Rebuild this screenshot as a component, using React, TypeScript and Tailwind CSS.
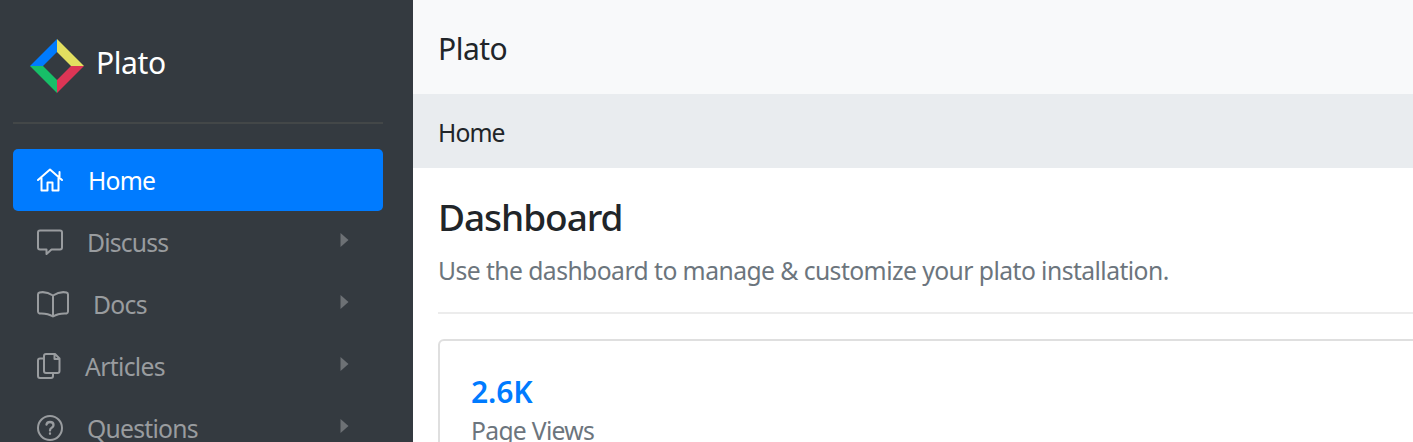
const Item = ({ label, icon, text }: { label: string; icon: React.ReactNode; text: string }) => (
  <a className="flex h-[62px] shrink-0 items-center justify-between pl-6 pr-[34px] text-[#999c9f]">
    <span className="flex items-center">
      {icon}
      <span className={`ml-6 pt-0.5 ${text}`}>{label}</span>
    </span>
    <svg width="9" height="16" className="-mt-1"><path d="M.5 1v14l8-7z" fill="#6d7175" /></svg>
  </a>
);
const s = { fill: 'none', stroke: 'currentColor', strokeWidth: 2, strokeLinejoin: 'round' as const, strokeLinecap: 'round' as const };
export default function App() {
  return (
    <div className="flex h-[442px] w-full overflow-hidden bg-white font-['Noto_Sans',sans-serif] text-[24.7px] leading-[38px] text-[#212529]">
      <aside className="flex w-[413px] shrink-0 flex-col bg-[#343a40] pl-[13px] pr-[30px]">
        <div className="flex h-[124px] shrink-0 items-center border-b-2 border-[#434748] pl-[17px] pt-[9px] text-[30px] tracking-[-0.4px] text-white">
          <svg width="54" height="54" viewBox="0 0 54 54" className="mr-3">
            <path d="M27 0v13L13 27H0z" fill="#007bff" /><path d="M27 0l27 27H41L27 13z" fill="#e2df60" />
            <path d="M54 27L27 54V41l14-14z" fill="#dc3555" /><path d="M0 27h13l14 14v13z" fill="#17bf68" />
          </svg>
          <span className="-mt-[5px]">Plato</span>
        </div>
        <nav className="mt-[25px]">
          <a className="flex h-[62px] items-center rounded-[5px] bg-[#007bff] pl-6 tracking-[-0.75px] text-white">
            <svg width="26" height="26" className="mr-[25px]" {...s}><path d="M1 13L13 2.5 25 13M4.500 11v12.500h6V15.500h5v8h6V11M22.500 5v5" /></svg><span className="pt-0.5">Home</span>
          </a>
          <Item label="Discuss" text="tracking-[-0.8px]" icon={<svg width="26" height="26" {...s}><path d="M3 1.500h20q2 0 2 2v15q0 2-2 2h-8.500l-5 4.500v-4.500H3q-2 0-2-2v-15q0-2 2-2z" /></svg>} />
          <Item label="Docs" text="tracking-[-0.7px]" icon={<svg width="32" height="27" {...s}><path d="M16 4.500V25.500M16 4.500Q9 0 2.500 1.500 1 2 1 3.500v17Q1 22 2.500 22.500q8-.5 13.500 3 5.500-3.500 13.500-3 1.500-.5 1.500-2v-17q0-1.500-1.500-2Q23 0 16 4.500" /></svg>} />
          <Item label="Articles" text="tracking-[-0.65px]" icon={<svg width="24" height="26" {...s}><path d="M9 1h9l4.500 4.500V18q0 2-2 2H9q-2 0-2-2V3q0-2 2-2zM17.500 1v5h5M7 5.500H3q-2 0-2 2V23q0 2 2 2h11q2 0 2-2v-3" /></svg>} />
          <Item label="Questions" text="tracking-[-0.75px]" icon={<svg width="26" height="26" {...s}><circle cx="13" cy="13" r="12" /><path d="M9.500 9.500q.5-2.500 3.500-2.500 3.500 0 3.500 3 0 1.500-1.500 2.500-2 1-2 3M13 18.500v.3" strokeWidth="2.300" /></svg>} />
        </nav>
      </aside>
      <main className="min-w-0 flex-1">
        <div className="h-[94px] bg-[#f8f9fa] pl-[25px] pt-[30px] text-[30px] tracking-[-0.5px]">Plato</div>
        <div className="h-[74px] bg-[#e9ecef] pl-[25px] pt-5 tracking-[-0.9px]">Home</div>
        <div className="pl-[25px] pt-[25px]">
          <h1 className="text-[37px] font-medium leading-[48px] tracking-[-1.05px]">Dashboard</h1>
          <p className="mt-[11px] tracking-[-0.56px] text-[#6c757d]">Use the dashboard to manage &amp; customize your plato installation.</p>
          <hr className="mt-[22px] border-t-2 border-[#ececec]" />
          <div className="-mr-2 mt-[25px] h-[150px] rounded-md border-2 border-[#dfdfdf] pl-[31px] pt-8">
            <div className="text-[30px] font-semibold tracking-[-0.1px] text-[#007bff]">2.6K</div>
            <div className="mt-px tracking-[-0.7px] text-[#6c757d]">Page Views</div>
          </div>
        </div>
      </main>
    </div>
  );
}
